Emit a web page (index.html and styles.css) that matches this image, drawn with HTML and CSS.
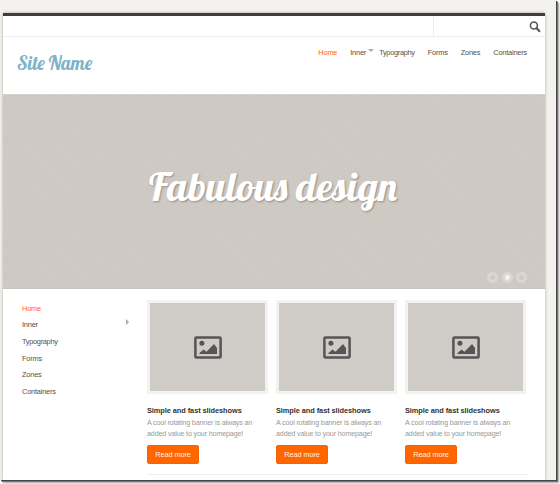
FILE: index.html
```html
<!DOCTYPE html>
<html lang="en">
<head>
<meta charset="utf-8">
<title>Site Name</title>
<link rel="stylesheet" href="styles.css">
</head>
<body>
<svg class="symbols" aria-hidden="true">
  <symbol id="picture" viewBox="0 0 28 23">
    <rect x="1.4" y="1.4" width="25.2" height="20.2" rx="1" fill="none" stroke="#555557" stroke-width="2.5"/>
    <circle cx="7.9" cy="7.2" r="2.5" fill="#555557"/>
    <path d="M5.5 18v-1l4-3.5 3 2.2 7.5-7.6 3 4V18z" fill="#555557"/>
  </symbol>
</svg>
<div class="window">
  <div class="page">
    <div class="topbar">
      <div class="search">
        <svg class="search-icon" viewBox="0 0 12 12"><circle cx="4.9" cy="4.5" r="3.5" fill="none" stroke="#555" stroke-width="1.6"/><path d="M7.6 7.3l2.7 2.8" stroke="#555" stroke-width="2.2" stroke-linecap="round"/></svg>
      </div>
    </div>
    <header class="header">
      <svg class="logo" viewBox="0 0 90 34"><text x="4" y="23" textLength="75" lengthAdjust="spacingAndGlyphs">Site Name</text></svg>
      <nav class="nav">
        <a class="active">Home</a><a class="has-menu">Inner</a><a>Typography</a><a>Forms</a><a>Zones</a><a>Containers</a>
      </nav>
    </header>
    <section class="hero">
      <svg class="hero-title" viewBox="0 0 270 64"><text x="11" y="41" textLength="248" lengthAdjust="spacingAndGlyphs">Fabulous design</text></svg>
      <div class="dots"><i></i><i class="on"></i><i></i></div>
    </section>
    <main class="content">
      <nav class="side">
        <a class="active">Home</a><a class="has-sub">Inner</a><a>Typography</a><a>Forms</a><a>Zones</a><a>Containers</a>
      </nav>
      <div class="cards">
        <article class="card">
          <div class="thumb"><svg><use href="#picture"/></svg></div>
          <h3>Simple and fast slideshows</h3>
          <p>A cool rotating banner is always an<br>added value to your homepage!</p>
          <a class="button">Read more</a>
        </article>
        <article class="card">
          <div class="thumb"><svg><use href="#picture"/></svg></div>
          <h3>Simple and fast slideshows</h3>
          <p>A cool rotating banner is always an<br>added value to your homepage!</p>
          <a class="button">Read more</a>
        </article>
        <article class="card">
          <div class="thumb"><svg><use href="#picture"/></svg></div>
          <h3>Simple and fast slideshows</h3>
          <p>A cool rotating banner is always an<br>added value to your homepage!</p>
          <a class="button">Read more</a>
        </article>
      </div>
    </main>
  </div>
</div>
</body>
</html>
```
FILE: styles.css
```css
* { box-sizing: border-box; }
body {
  margin: 0;
  width: 560px;
  height: 484px;
  overflow: hidden;
  background: #fff;
  font: 7.4px/10px "Liberation Sans", Arial, sans-serif;
  letter-spacing: -0.2px;
  color: #55504c;
}
.symbols { display: none; }
.window {
  width: 556px;
  height: 480px;
  padding: 13px 11px 0 3px;
  background: #f3f2ee;
  box-shadow: 1px 1px 0 #444, 2px 2px 1px #777, 3px 3px 2px #aaa;
}
.page {
  height: 467px;
  background: #fff;
  border-top: 3px solid #403e39;
  box-shadow: 0 0 3px #aaa8a0;
  clip-path: inset(-4px -4px 0 -4px);
}
.topbar {
  height: 21px;
  border-bottom: 1px solid #ececec;
  display: flex;
  justify-content: flex-end;
}
.search {
  width: 112px;
  border-left: 1px solid #ebebeb;
  display: flex;
  justify-content: flex-end;
  padding: 5px 4px 0 0;
}
.search-icon { width: 12px; height: 12px; }
.header {
  height: 57px;
  display: flex;
  justify-content: space-between;
  padding: 10px 18px 0 10px;
}
.logo { width: 90px; height: 34px; overflow: visible; letter-spacing: 0; }
.logo text {
  font: 19px Lobster, "Liberation Serif", serif;
  fill: #7db4c9;
}
.nav { display: flex; padding-top: 1px; }
.nav a {
  position: relative;
  margin-left: 13px;
  white-space: nowrap;
}
.nav a:nth-child(3) { letter-spacing: -0.3px; }
.nav .has-menu::after {
  content: "";
  position: absolute;
  left: 17.5px;
  top: 1px;
  border: 3px solid transparent;
  border-top: 3px solid #aaa;
}
.active { color: #ff6610; }
.hero {
  position: relative;
  height: 195px;
  padding: 65px 0 0 135px;
  border-top: 1px solid #d5d1cb;
  border-bottom: 1px solid #c8c4be;
  background-color: #cec9c3;
  background-image: repeating-linear-gradient(45deg, #c9c4be55 0 1px, transparent 1px 3px), repeating-linear-gradient(-45deg, #d4cfc955 0 1px, transparent 1px 3px);
}
.hero-title { display: block; width: 270px; height: 64px; overflow: visible; letter-spacing: 0; }
.hero-title text {
  font: 38.5px Lobster, "Liberation Serif", serif;
  fill: #fff;
  text-shadow: 1px 1px 2px #96908a;
}
.dots {
  position: absolute;
  right: 18px;
  bottom: 5px;
  display: flex;
  gap: 3.4px;
}
.dots i {
  width: 11px;
  height: 11px;
  border: 3px solid #dad7d2;
  border-radius: 50%;
}
.dots .on { background: #f3f2f0; }
.content {
  display: grid;
  grid-template-columns: 125px 380px;
  padding: 11px 0 0 19px;
}
.side { display: flex; flex-direction: column; padding-top: 3.6px; }
.side a { position: relative; height: 16.7px; }
.side a:nth-child(3) { letter-spacing: -0.3px; }
.side .has-sub::after {
  content: "";
  position: absolute;
  left: 104px;
  top: -1px;
  border: 3px solid transparent;
  border-left: 3px solid #aaa;
}
.cards {
  display: grid;
  grid-template-columns: repeat(3, 121px);
  column-gap: 8px;
  height: 175px;
  border-bottom: 1px solid #eee;
}
.thumb {
  height: 94px;
  border: 3px solid #f2f2f1;
  background: #cfccc7;
  display: flex;
  align-items: center;
  justify-content: center;
}
.thumb svg { width: 28px; height: 23px; }
h3 {
  margin: 12px 0 0;
  font-size: 7.4px;
  letter-spacing: -0.07px;
  line-height: 10px;
  color: #333;
}
p {
  margin: 1px 0 0;
  font-size: 7.2px;
  letter-spacing: -0.17px;
  line-height: 11px;
  color: #999;
  white-space: nowrap;
}
.button {
  display: block;
  width: 52px;
  height: 19px;
  margin-top: 6px;
  border: 1px solid #ef650c;
  border-radius: 2px;
  background: #ff6600;
  color: #fff0e3;
  letter-spacing: -0.1px;
  line-height: 17px;
  text-align: center;
}
```
